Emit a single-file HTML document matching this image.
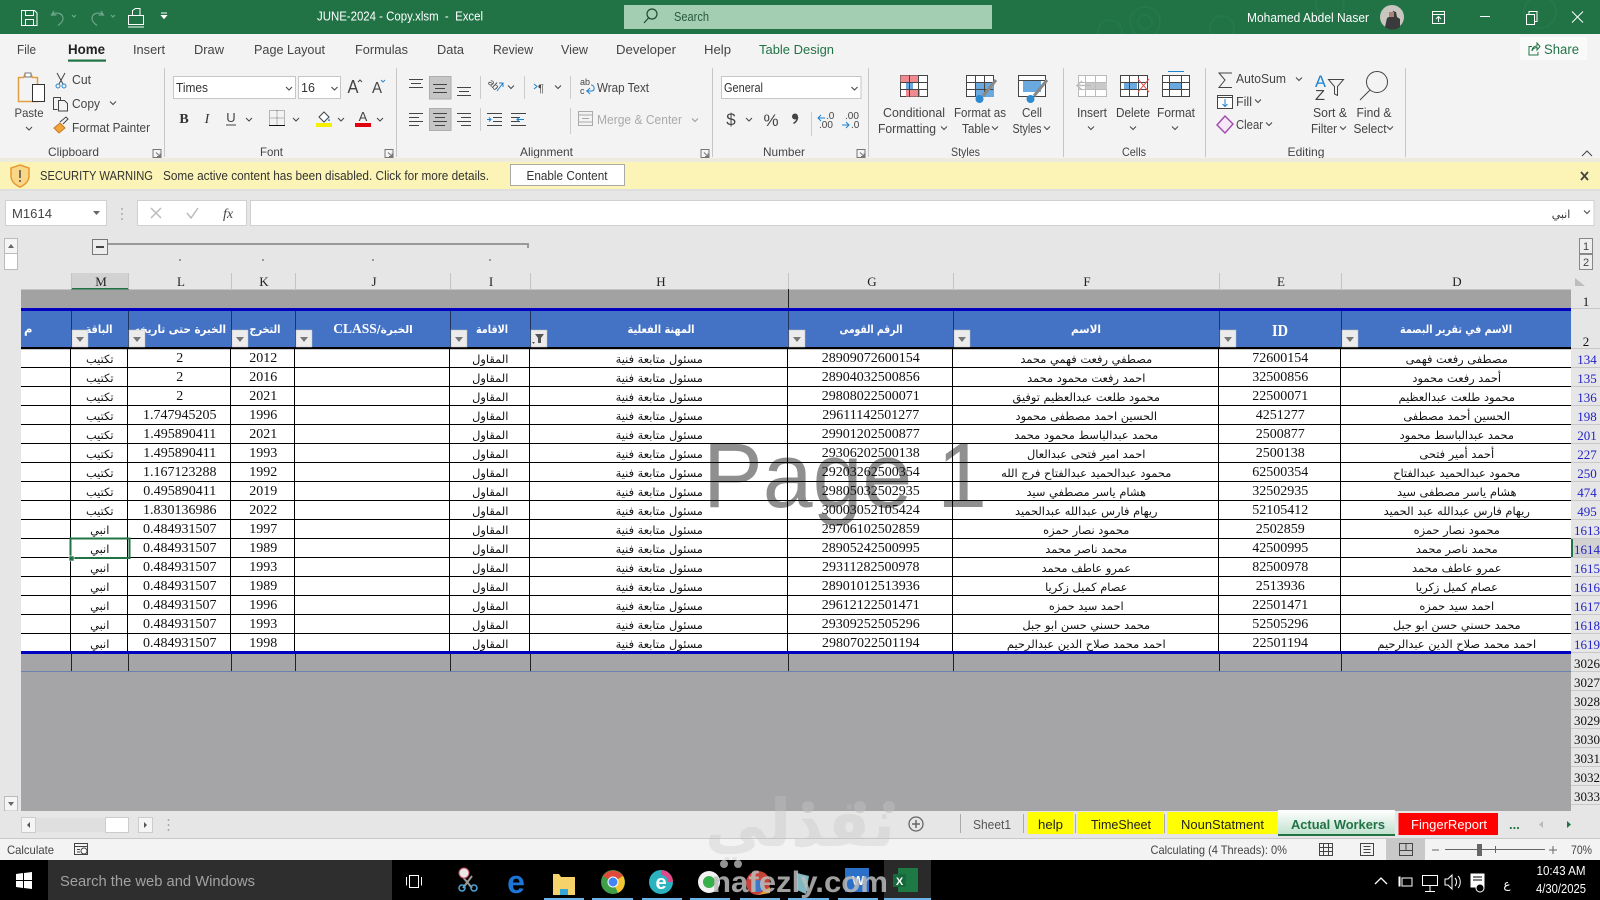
<!DOCTYPE html>
<html lang="en"><head><meta charset="utf-8"><title>JUNE-2024 - Copy.xlsm - Excel</title>
<style>
html,body{margin:0;padding:0;width:1600px;height:900px;overflow:hidden;background:#e6e6e6}
svg{position:absolute;left:0;top:0}
text{font-family:"Liberation Sans","DejaVu Sans",sans-serif;font-size:12.5px;fill:#444;white-space:pre}
.m{text-anchor:middle}
.w{fill:#fff}
.ar{font-family:"DejaVu Sans",sans-serif}
.s{font-family:"Liberation Serif","DejaVu Sans",serif}
.hd{font-family:"DejaVu Sans",sans-serif;font-weight:bold;font-size:11.5px;fill:#fff;text-anchor:middle}
.col{font-family:"Liberation Serif",serif;font-size:13px;fill:#222;text-anchor:middle}
.rb{font-family:"Liberation Serif",serif;font-size:13px;fill:#2222c8;text-anchor:middle}
.rk{font-family:"Liberation Serif",serif;font-size:13px;fill:#111;text-anchor:middle}
.i{fill:none;stroke:#444;stroke-width:1}
#t{position:absolute;left:21px;top:349px;width:1550px;table-layout:fixed;border-collapse:separate;border-spacing:0;font-family:"Liberation Serif","DejaVu Sans",serif;font-size:14px;color:#111;z-index:2}
#t td{height:19px;box-sizing:border-box;padding:2px 0 0 1.5px;text-align:center;border-right:1px solid #000;border-bottom:1px solid #000;overflow:hidden;white-space:nowrap;line-height:16px}
#t td:last-child{border-right:0}
#t td:nth-child(2),#t td:nth-child(6),#t td:nth-child(7),#t td:nth-child(9),#t td:nth-child(11){font-family:"DejaVu Sans",sans-serif;font-size:11.4px}
</style></head><body>
<svg width="1600" height="900" viewBox="0 0 1600 900" style="z-index:1">
<defs><path id="c" d="M-3-1.5l3 3 3-3" fill="none" stroke="#444"/><path id="g" d="M-3-1.5l3 3 3-3" fill="none" stroke="#999"/></defs>
<!-- title bar -->
<rect width="1600" height="34" fill="#217346"/>
<g fill="none" stroke="#25774c" stroke-width="2"><circle cx="1145" cy="22" r="15"/><circle cx="1145" cy="22" r="7"/><circle cx="1222" cy="28" r="12"/><circle cx="1110" cy="32" r="12"/><circle cx="1330" cy="4" r="14"/><circle cx="1540" cy="12" r="16"/></g>
<rect x="624" y="5" width="368" height="24" fill="#a3ceb2"/>
<g fill="none" stroke="#fff"><path d="M21.500 10.500h13l2.500 2.500v12.500h-15.500z"/><path d="M25.500 10.500v5h8v-5M25.500 25.500v-6h8v6"/><path d="M132.500 15v-4.500l3-2h4.500v6.500M128.500 15.500h15v9h-15zM128 27h16"/><path d="M161 13h6M161.500 15.500h5l-2.500 3z" fill="#fff"/></g>
<g fill="none" stroke="#6fa58a" stroke-width="1.200"><path d="M54 11l-2.500 4h5M52 14.500c5-3 11-1 11 4 0 3-2.500 5-5 7"/><path d="M101 11l2.500 4h-5M103 14.500c-5-3-11-1-11 4 0 3 2.500 5 5 7"/><path d="M72 15l2 2 2-2M111 15l2 2 2-2"/></g>
<g fill="none" stroke="#1d4a33" stroke-width="1.200"><circle cx="652" cy="14" r="5"/><path d="M648.500 18l-4.500 5"/></g>
<text x="317" y="20.500" class="w" font-size="13" textLength="166" lengthAdjust="spacingAndGlyphs" style="font-size:13px">JUNE-2024 - Copy.xlsm  -  Excel</text>
<text x="674" y="21" style="font-size:12.500px;fill:#2a5a40" textLength="35" lengthAdjust="spacingAndGlyphs">Search</text>
<text x="1247" y="22" class="w" style="font-size:12.500px" textLength="122" lengthAdjust="spacingAndGlyphs">Mohamed Abdel Naser</text>
<circle cx="1392" cy="17" r="12" fill="#c9c6c0"/><path d="M1385 27l2-9 4-2 2-5 3 1 1 5 3 2 0 8a12 12 0 0 1-15 0z" fill="#3a3a3c"/><rect x="1389" y="12" width="5" height="5" fill="#a88474"/>
<g fill="none" stroke="#fff"><path d="M1432.500 11.500h12v12h-12zM1432.500 14.500h12M1438.500 22v-5.500M1436 19l2.500-2.500 2.500 2.500"/><path d="M1480 16.500h10"/><path d="M1526.500 14.500h8v10h-8zM1529 14.500v-3h8v10h-2.500"/><path d="M1572 11.500l11 11M1583 11.500l-11 11"/></g>
<!-- ribbon -->
<rect y="34" width="1600" height="128" fill="#f3f3f3"/>
<g style="font-size:13px">
<text x="17" y="54" textLength="19" lengthAdjust="spacingAndGlyphs" style="font-size:13px">File</text>
<text x="68" y="54" textLength="37" lengthAdjust="spacingAndGlyphs" style="font-size:13.500px;fill:#222;font-weight:600">Home</text>
<text x="133" y="54" textLength="32" lengthAdjust="spacingAndGlyphs" style="font-size:13px">Insert</text>
<text x="194" y="54" textLength="30" lengthAdjust="spacingAndGlyphs" style="font-size:13px">Draw</text>
<text x="254" y="54" textLength="71" lengthAdjust="spacingAndGlyphs" style="font-size:13px">Page Layout</text>
<text x="355" y="54" textLength="53" lengthAdjust="spacingAndGlyphs" style="font-size:13px">Formulas</text>
<text x="437" y="54" textLength="27" lengthAdjust="spacingAndGlyphs" style="font-size:13px">Data</text>
<text x="493" y="54" textLength="40" lengthAdjust="spacingAndGlyphs" style="font-size:13px">Review</text>
<text x="561" y="54" textLength="27" lengthAdjust="spacingAndGlyphs" style="font-size:13px">View</text>
<text x="616" y="54" textLength="60" lengthAdjust="spacingAndGlyphs" style="font-size:13px">Developer</text>
<text x="704" y="54" textLength="27" lengthAdjust="spacingAndGlyphs" style="font-size:13px">Help</text>
<text x="759" y="54" textLength="75" lengthAdjust="spacingAndGlyphs" style="font-size:13px;fill:#217346">Table Design</text>
</g>
<rect x="68" y="59.500" width="38" height="2.200" fill="#217346"/>
<rect x="1520" y="37" width="67" height="23" fill="#fafafa"/>
<path d="M1532 46.500h-3v8.500h9v-3M1532 51c0-3 2-5 5-5v-3l3 3.500-3 3.500v-2.500c-2 0-4 1-5 3.500" fill="none" stroke="#217346"/>
<text x="1544" y="54" textLength="35" lengthAdjust="spacingAndGlyphs" style="font-size:13.500px;fill:#217346">Share</text>
<g stroke="#c6c6c6"><path d="M164.500 68v89M396.500 68v89M712.500 68v89M868.500 68v89M1063.500 68v89M1205.500 68v89M1405.500 68v89"/></g>
<!-- clipboard -->
<path d="M18.500 77.500h5l2-4h5l2 4h5v24h-19z" fill="#f3f3f3" stroke="#e0a040" stroke-width="1.500"/><rect x="32.500" y="84.500" width="12" height="17" fill="#fff" stroke="#333"/><rect x="25" y="73" width="6" height="4" fill="#fff" stroke="#777"/>
<text x="29" y="117" class="m" style="font-size:12px" textLength="29" lengthAdjust="spacingAndGlyphs">Paste</text><use href="#c" x="29" y="128.500"/>
<path d="M57 73l6 11M65 73l-6 11" class="i"/><circle cx="58" cy="86" r="2" fill="none" stroke="#2d89d0"/><circle cx="64" cy="86" r="2" fill="none" stroke="#2d89d0"/>
<text x="72" y="84" style="font-size:12.500px" textLength="19" lengthAdjust="spacingAndGlyphs">Cut</text>
<path d="M53.500 97.500h7l0 3M53.500 97.500v12h4M58.500 100.500h6l3 3v7.500h-9z" class="i"/>
<text x="72" y="108" style="font-size:12.500px" textLength="28" lengthAdjust="spacingAndGlyphs">Copy</text><use href="#c" x="113" y="103"/>
<path d="M54 128l6-5 5 5-6 5z" fill="#f2a33a" stroke="#c47a20"/><path d="M60 122l6-5 2 2-5 5" class="i"/>
<text x="72" y="132" style="font-size:12.500px" textLength="78" lengthAdjust="spacingAndGlyphs">Format Painter</text>
<text x="48" y="156" style="font-size:12px" textLength="51" lengthAdjust="spacingAndGlyphs">Clipboard</text>
<path id="l" d="M153 149.500h8v8h-8zM156 152.500l4 4M160 153.500v3h-3" fill="none" stroke="#777"/>
<use href="#l" x="232"/><use href="#l" x="548"/><use href="#l" x="704"/>
<!-- font -->
<rect x="173.500" y="76.500" width="122" height="22" fill="#fff" stroke="#c6c6c6"/><rect x="298.500" y="76.500" width="42" height="22" fill="#fff" stroke="#c6c6c6"/>
<text x="176" y="92" style="font-size:12.500px;fill:#333" textLength="32" lengthAdjust="spacingAndGlyphs">Times</text><use href="#c" x="289" y="88.500"/>
<text x="301" y="92" style="font-size:12.500px;fill:#333">16</text><use href="#c" x="334.500" y="88.500"/>
<text x="353" y="93" class="m" style="font-size:18px" textLength="11" lengthAdjust="spacingAndGlyphs">A</text><path d="M358 82l2-2 2 2" class="i"/><text x="377" y="93" class="m" style="font-size:16px" textLength="10" lengthAdjust="spacingAndGlyphs">A</text><path d="M381 80l2 2 2-2" style="fill:none;stroke:#2d89d0"/>
<text x="184" y="123" class="m s" style="font-size:14px;font-weight:bold;fill:#333">B</text>
<text x="207" y="123" class="m s" style="font-size:14px;font-style:italic;fill:#333">I</text>
<text x="231" y="122" class="m" style="font-size:13px">U</text><path d="M226 125h10" class="i"/><use href="#c" x="249" y="119.500"/>
<path d="M269.500 110.500h15v15h-15zM277 110.500v15M269.500 118h15" fill="none" stroke="#777" stroke-dasharray="1 1"/><path d="M269 125.500h16" class="i" style="stroke:#111"/><use href="#c" x="296" y="119.500"/>
<path d="M319 117l5-5 5 5-5 5z" fill="#fff" stroke="#444"/><path d="M329 118l1 3-2 0z" fill="#2d89d0"/><rect x="316" y="123" width="16" height="4" fill="#f5ef00"/><use href="#c" x="341" y="119.500"/>
<text x="363" y="121" class="m" style="font-size:13px">A</text><rect x="355" y="123" width="16" height="4" fill="#e00010"/><use href="#c" x="380" y="119.500"/>
<text x="260" y="156" style="font-size:12px" textLength="23" lengthAdjust="spacingAndGlyphs">Font</text>
<!-- alignment -->
<rect x="429.500" y="76.500" width="21.500" height="22.500" fill="#c6c6c6" stroke="#adadad"/><rect x="429.500" y="108.500" width="21.500" height="22" fill="#c6c6c6" stroke="#adadad"/>
<g class="i" fill="none" stroke="#444"><path d="M409 79.500h14M411 83.500h10M409 87.500h14"/><path d="M433 84.500h14M435 88.500h10M433 92.500h14"/><path d="M457 87.500h14M459 91.500h10M457 95.500h14"/><path d="M409 113.500h14M409 117.500h10M409 121.500h14M409 125.500h10"/><path d="M433 113.500h14M435 117.500h10M433 121.500h14M435 125.500h10"/><path d="M457 113.500h14M461 117.500h10M457 121.500h14M461 125.500h10"/><path d="M487 113.500h15M493 117.500h9M493 121.500h9M487 125.500h15"/><path d="M511 113.500h15M511 117.500h9M511 121.500h9M511 125.500h15"/></g>
<text x="489" y="87" transform="rotate(45 493 83)" style="font-size:10px">ab</text>
<path d="M487 119.500h4M489 117.500l2 2-2 2M517 119.500h7M519 117.500l-2 2 2 2" fill="none" stroke="#1b82d2"/><path d="M497 91l6-8M499 83h4v4" fill="none" stroke="#1b82d2"/>
<path d="M480.500 76v23M480.500 108v23M524.500 76v23M570.500 76v23M570.500 108v26" stroke="#ccc"/>
<use href="#c" x="511" y="87"/><use href="#c" x="558" y="87"/>
<path d="M534 84l3 2.500-3 2.500" fill="none" stroke="#1b82d2"/><text x="538" y="92" style="font-size:11px">¶</text>
<text x="580" y="85" style="font-size:9px">ab</text><text x="580" y="94" style="font-size:9px">c</text><path d="M586 91h6c3 0 3-6-1-6M590 88l-3 3 3 3" fill="none" stroke="#1b82d2"/>
<text x="597" y="92" style="font-size:12.500px" textLength="52" lengthAdjust="spacingAndGlyphs">Wrap Text</text>
<path d="M578.500 111.500h14v14h-14zM578.500 115h14M578.500 122h14M582 118.500h7" fill="none" stroke="#aaa"/>
<text x="597" y="124" style="font-size:12.500px;fill:#aaa" textLength="85" lengthAdjust="spacingAndGlyphs">Merge &amp; Center</text><use href="#g" x="695" y="120"/>
<text x="520" y="156" style="font-size:12px" textLength="53" lengthAdjust="spacingAndGlyphs">Alignment</text>
<!-- number -->
<rect x="721.500" y="76.500" width="139.500" height="22" fill="#fff" stroke="#c6c6c6"/>
<text x="724" y="92" style="font-size:12.500px;fill:#333" textLength="39" lengthAdjust="spacingAndGlyphs">General</text><use href="#c" x="854.500" y="88.500"/>
<text x="731" y="125" class="m" style="font-size:17px">$</text><use href="#c" x="749" y="119.500"/>
<text x="771" y="126" class="m" style="font-size:17px">%</text>
<circle cx="795" cy="116.500" r="3" fill="#444"/><path d="M797.500 117c0 3-1.500 5-4 6.500" fill="none" stroke="#444" stroke-width="1.600"/>
<path d="M811.500 112v24" stroke="#ccc"/>
<text x="826" y="119" style="font-size:10px">.0</text><text x="819" y="128" style="font-size:10px">.00</text><path d="M818 118h7M821 115l-3 3 3 3" fill="none" stroke="#1b82d2"/>
<text x="845" y="119" style="font-size:10px">.00</text><text x="851" y="128" style="font-size:10px">.0</text><path d="M842 125h7M846 122l3 3-3 3" fill="none" stroke="#1b82d2"/>
<text x="763" y="156" style="font-size:12px" textLength="42" lengthAdjust="spacingAndGlyphs">Number</text>
<!-- styles -->
<rect x="900.500" y="75.500" width="27" height="21" fill="#fff" stroke="#444"/><rect x="900.500" y="75.500" width="18" height="7" fill="#f08a90"/><rect x="906" y="90" width="14" height="6.500" fill="#f08a90"/><rect x="906" y="83" width="7" height="6.500" fill="#6aa9e0"/><path d="M900.500 82.500h27M900.500 89.500h27M909.500 75.500v21M918.500 75.500v21" stroke="#444" fill="none"/>
<rect x="966.500" y="75.500" width="27" height="21" fill="#fff" stroke="#444"/><rect x="976" y="83" width="18" height="14" fill="#6aa9e0"/><path d="M966.500 82.500h27M966.500 89.500h27M975.500 75.500v21M984.500 75.500v21" stroke="#444" fill="none"/><path d="M996 80l-13 16" stroke="#888" stroke-width="3"/><circle cx="979.500" cy="99" r="4" fill="#2d89d0"/>
<rect x="1018.500" y="75.500" width="27" height="21" fill="#fff" stroke="#444"/><rect x="1023" y="81" width="18" height="11" fill="#6aa9e0"/><path d="M1018.500 80.500h27" stroke="#444"/><path d="M1047 80l-13 16" stroke="#888" stroke-width="3"/><circle cx="1030.500" cy="99" r="4" fill="#2d89d0"/>
<text x="914" y="117" class="m" style="font-size:12.500px" textLength="62" lengthAdjust="spacingAndGlyphs">Conditional</text>
<text x="907" y="133" class="m" style="font-size:12.500px" textLength="58" lengthAdjust="spacingAndGlyphs">Formatting</text><use href="#c" x="944" y="128"/>
<text x="980" y="117" class="m" style="font-size:12.500px" textLength="52" lengthAdjust="spacingAndGlyphs">Format as</text>
<text x="976" y="133" class="m" style="font-size:12.500px" textLength="28" lengthAdjust="spacingAndGlyphs">Table</text><use href="#c" x="995" y="128"/>
<text x="1032" y="117" class="m" style="font-size:12.500px" textLength="20" lengthAdjust="spacingAndGlyphs">Cell</text>
<text x="1027" y="133" class="m" style="font-size:12.500px" textLength="29" lengthAdjust="spacingAndGlyphs">Styles</text><use href="#c" x="1047" y="128"/>
<text x="951" y="156" style="font-size:12px" textLength="29" lengthAdjust="spacingAndGlyphs">Styles</text>
<!-- cells -->
<rect x="1078.500" y="75.500" width="28" height="21" fill="#fff" stroke="#bbb"/><rect x="1085" y="82" width="22" height="7" fill="#c9c9c9"/><path d="M1085.500 75.500v21M1095.500 75.500v21M1078.500 82.500h28M1078.500 89.500h28" stroke="#bbb" fill="none"/><path d="M1077 85.500h14M1082 81l-5 4.500 5 4.500" fill="none" stroke="#bbb" stroke-width="1.500"/>
<rect x="1120.500" y="75.500" width="27" height="21" fill="#fff" stroke="#444"/><rect x="1124" y="82" width="13" height="7" fill="#6aa9e0"/><path d="M1129.500 75.500v21M1138.500 75.500v21M1120.500 82.500h27M1120.500 89.500h27" stroke="#444" fill="none"/><path d="M1138 79l11 13M1149 79l-11 13" stroke="#e2504c" fill="none"/>
<rect x="1162.500" y="75.500" width="27" height="21" fill="#fff" stroke="#444"/><rect x="1169" y="82" width="13" height="7" fill="#6aa9e0"/><path d="M1169.500 75.500v21M1181.500 75.500v21M1162.500 82.500h27M1162.500 89.500h27" stroke="#444" fill="none"/><path d="M1168 71.500h16" stroke="#1b82d2"/>
<text x="1092" y="117" class="m" style="font-size:12.500px" textLength="30" lengthAdjust="spacingAndGlyphs">Insert</text><use href="#c" x="1091" y="128"/>
<text x="1133" y="117" class="m" style="font-size:12.500px" textLength="34" lengthAdjust="spacingAndGlyphs">Delete</text><use href="#c" x="1133" y="128"/>
<text x="1176" y="117" class="m" style="font-size:12.500px" textLength="38" lengthAdjust="spacingAndGlyphs">Format</text><use href="#c" x="1175" y="128"/>
<text x="1134" y="156" class="m" style="font-size:12px" textLength="24" lengthAdjust="spacingAndGlyphs">Cells</text>
<!-- editing -->
<path d="M1232 73h-13l6 7-6 7.500h13" class="i"/><text x="1236" y="83" style="font-size:12.500px" textLength="50" lengthAdjust="spacingAndGlyphs">AutoSum</text><use href="#c" x="1299" y="79"/>
<rect x="1217.500" y="95.500" width="15" height="13" fill="#fff" stroke="#444"/><path d="M1217.500 97.500h15" stroke="#444"/><path d="M1225 99v7M1222.500 104l2.500 2.500 2.500-2.500" fill="none" stroke="#1b82d2"/>
<text x="1236" y="106" style="font-size:12.500px" textLength="16" lengthAdjust="spacingAndGlyphs">Fill</text><use href="#c" x="1258" y="101"/>
<path d="M1217 125l8-9 8 8-8 9z" fill="#f6e9f7" stroke="#a445b0" stroke-width="1.400"/>
<text x="1236" y="129" style="font-size:12.500px" textLength="27" lengthAdjust="spacingAndGlyphs">Clear</text><use href="#c" x="1269" y="124"/>
<text x="1315" y="87" style="font-size:17px;fill:#1b82d2" textLength="11" lengthAdjust="spacingAndGlyphs">A</text><text x="1315" y="100" style="font-size:15px" textLength="10" lengthAdjust="spacingAndGlyphs">Z</text><path d="M1328.500 79.500h15l-6 7v9l-3-1.500v-7.500z" class="i"/>
<circle cx="1377" cy="82" r="10.500" class="i"/><path d="M1370 90l-10 10" class="i"/>
<text x="1330" y="117" class="m" style="font-size:12.500px" textLength="34" lengthAdjust="spacingAndGlyphs">Sort &amp;</text>
<text x="1324" y="133" class="m" style="font-size:12.500px" textLength="26" lengthAdjust="spacingAndGlyphs">Filter</text><use href="#c" x="1343" y="128"/>
<text x="1374" y="117" class="m" style="font-size:12.500px" textLength="35" lengthAdjust="spacingAndGlyphs">Find &amp;</text>
<text x="1370" y="133" class="m" style="font-size:12.500px" textLength="33" lengthAdjust="spacingAndGlyphs">Select</text><use href="#c" x="1390" y="128"/>
<text x="1306" y="156" class="m" style="font-size:12px" textLength="37" lengthAdjust="spacingAndGlyphs">Editing</text>
<path d="M1582 156l5-5 5 5" class="i"/>
<!-- security bar -->
<rect y="158" width="1600" height="4" fill="#ecebdd"/>
<rect y="162" width="1600" height="27" fill="#fbf4b6"/><rect y="189" width="1600" height="2" fill="#dedede"/>
<path d="M20 165l9 3v8c0 5-4 9-9 11-5-2-9-6-9-11v-8z" fill="#f8d888" stroke="#e89a30" stroke-width="1.500"/><path d="M20 170v8M20 180v2" stroke="#444" stroke-width="1.400"/>
<text x="40" y="180" style="font-size:12.500px;fill:#333" textLength="113" lengthAdjust="spacingAndGlyphs">SECURITY WARNING</text>
<text x="163" y="180" style="font-size:12.500px;fill:#333" textLength="326" lengthAdjust="spacingAndGlyphs">Some active content has been disabled. Click for more details.</text>
<rect x="510.500" y="164.500" width="114" height="21" fill="#fff" stroke="#aaa"/>
<text x="567" y="180" class="m" style="font-size:12.500px;fill:#333" textLength="81" lengthAdjust="spacingAndGlyphs">Enable Content</text>
<path d="M1581 172l7 8M1588 172l-7 8" fill="none" stroke="#444" stroke-width="1.800"/>
<!-- formula bar -->
<rect x="5.500" y="200.500" width="101" height="25" fill="#fff" stroke="#d0d0d0"/>
<text x="12" y="218" style="font-size:13px;fill:#444" textLength="40" lengthAdjust="spacingAndGlyphs">M1614</text><path d="M93 211h7l-3.500 4z" fill="#666"/>
<path d="M122 208v2M122 213v2M122 218v2" stroke="#aaa" stroke-width="1.500"/>
<rect x="137.500" y="200.500" width="109" height="25" fill="#fff" stroke="#d0d0d0"/><rect x="250.500" y="200.500" width="1343.500" height="25" fill="#fff" stroke="#d0d0d0"/>
<path d="M151 208l10 10M161 208l-10 10" fill="none" stroke="#bbb" stroke-width="1.500"/><path d="M187 213l4 5 7-10" fill="none" stroke="#bbb" stroke-width="1.500"/>
<text x="228" y="218" class="m s" style="font-size:14px;font-style:italic;fill:#444">fx</text>
<text x="1561" y="218" class="m ar" style="font-size:11px;fill:#333">انبي</text><use href="#c" x="1587" y="212"/>
<!-- outline area -->
<rect x="4.500" y="238.500" width="13" height="15" fill="#f5f5f5" stroke="#bbb"/><path d="M8 248l3-4 3 4z" fill="#666"/><rect x="4.500" y="253.500" width="13" height="16" fill="#fff" stroke="#bbb"/>
<rect x="92.500" y="239.500" width="15" height="15" fill="#ececec" stroke="#777"/><path d="M96 247h8" stroke="#444" stroke-width="2"/>
<path d="M108 244h420v4" fill="none" stroke="#999" stroke-width="2"/>
<g fill="#999"><rect x="179" y="259" width="2" height="2"/><rect x="262" y="259" width="2" height="2"/><rect x="372" y="259" width="2" height="2"/><rect x="489" y="259" width="2" height="2"/></g>
<rect x="1579.500" y="238.500" width="13" height="15" fill="#eee" stroke="#888"/><rect x="1579.500" y="254.500" width="13" height="15" fill="#eee" stroke="#888"/>
<text x="1586" y="250" class="m" style="font-size:11px">1</text><text x="1586" y="266" class="m" style="font-size:11px">2</text>
<!-- column headers -->
<rect x="71" y="273" width="58" height="15" fill="#d2d2d2"/><rect x="71" y="288" width="58" height="1.500" fill="#217346"/>
<path d="M71.500 273v16M128.500 273v16M231.500 273v16M295.500 273v16M450.500 273v16M530.500 273v16M788.500 273v16M953.500 273v16M1219.500 273v16M1341.500 273v16" stroke="#c4c4c4"/>
<text x="101" y="286" class="col">M</text><text x="181" y="286" class="col">L</text><text x="264" y="286" class="col">K</text><text x="374" y="286" class="col">J</text><text x="491" y="286" class="col">I</text><text x="661" y="286" class="col">H</text><text x="872" y="286" class="col">G</text><text x="1087" y="286" class="col">F</text><text x="1281" y="286" class="col">E</text><text x="1457" y="286" class="col">D</text>
<path d="M1575 278v8h10z" fill="#bdbdbd"/>
<!-- grid backgrounds -->
<rect x="21" y="289.500" width="1550" height="521.500" fill="#a5a4a7"/>
<rect x="21" y="289.500" width="1550" height="19" fill="#a2a2a2"/>
<path d="M788.500 289v19" stroke="#222"/>
<rect x="21" y="349" width="1550" height="305" fill="#fff"/>
<rect x="21" y="311" width="1550" height="36" fill="#4472c4"/>
<!-- watermark page 1 -->
<text x="703" y="507" style="font-size:92px;fill:#8f8f8f" textLength="284" lengthAdjust="spacingAndGlyphs">Page 1</text>
</svg>
<table id="t"><colgroup><col style="width:50px"><col style="width:57px"><col style="width:103px"><col style="width:64px"><col style="width:155px"><col style="width:80px"><col style="width:258px"><col style="width:165px"><col style="width:266px"><col style="width:122px"><col style="width:230px"></colgroup>
<tr><td></td><td>تكتيب</td><td>2</td><td>2012</td><td></td><td>المقاول</td><td>مسئول متابعة فنية</td><td>28909072600154</td><td>مصطفي رفعت فهمي محمد</td><td>72600154</td><td>مصطفى رفعت فهمى</td></tr>
<tr><td></td><td>تكتيب</td><td>2</td><td>2016</td><td></td><td>المقاول</td><td>مسئول متابعة فنية</td><td>28904032500856</td><td>احمد رفعت محمود محمد</td><td>32500856</td><td>أحمد رفعت محمود</td></tr>
<tr><td></td><td>تكتيب</td><td>2</td><td>2021</td><td></td><td>المقاول</td><td>مسئول متابعة فنية</td><td>29808022500071</td><td>محمود طلعت عبدالعظيم توفيق</td><td>22500071</td><td>محمود طلعت عبدالعظيم</td></tr>
<tr><td></td><td>تكتيب</td><td>1.747945205</td><td>1996</td><td></td><td>المقاول</td><td>مسئول متابعة فنية</td><td>29611142501277</td><td>الحسين احمد مصطفى محمود</td><td>4251277</td><td>الحسين أحمد مصطفى</td></tr>
<tr><td></td><td>تكتيب</td><td>1.495890411</td><td>2021</td><td></td><td>المقاول</td><td>مسئول متابعة فنية</td><td>29901202500877</td><td>محمد عبدالباسط محمود محمد</td><td>2500877</td><td>محمد عبدالباسط محمود</td></tr>
<tr><td></td><td>تكتيب</td><td>1.495890411</td><td>1993</td><td></td><td>المقاول</td><td>مسئول متابعة فنية</td><td>29306202500138</td><td>احمد امير فتحى عبدالعال</td><td>2500138</td><td>أحمد أمير فتحى</td></tr>
<tr><td></td><td>تكتيب</td><td>1.167123288</td><td>1992</td><td></td><td>المقاول</td><td>مسئول متابعة فنية</td><td>29203262500354</td><td>محمود عبدالحميد عبدالفتاح فرج الله</td><td>62500354</td><td>محمود عبدالحميد عبدالفتاح</td></tr>
<tr><td></td><td>تكتيب</td><td>0.495890411</td><td>2019</td><td></td><td>المقاول</td><td>مسئول متابعة فنية</td><td>29805032502935</td><td>هشام ياسر مصطفي سيد</td><td>32502935</td><td>هشام ياسر مصطفى سيد</td></tr>
<tr><td></td><td>تكتيب</td><td>1.830136986</td><td>2022</td><td></td><td>المقاول</td><td>مسئول متابعة فنية</td><td>30003052105424</td><td>ريهام فارس عبدالله عبدالحميد</td><td>52105412</td><td>ريهام فارس عبدالله عبد الحميد</td></tr>
<tr><td></td><td>انبي</td><td>0.484931507</td><td>1997</td><td></td><td>المقاول</td><td>مسئول متابعة فنية</td><td>29706102502859</td><td>محمود نصار حمزه</td><td>2502859</td><td>محمود نصار حمزه</td></tr>
<tr><td></td><td>انبي</td><td>0.484931507</td><td>1989</td><td></td><td>المقاول</td><td>مسئول متابعة فنية</td><td>28905242500995</td><td>محمد ناصر محمد</td><td>42500995</td><td>محمد ناصر محمد</td></tr>
<tr><td></td><td>انبي</td><td>0.484931507</td><td>1993</td><td></td><td>المقاول</td><td>مسئول متابعة فنية</td><td>29311282500978</td><td>عمرو عاطف محمد</td><td>82500978</td><td>عمرو عاطف محمد</td></tr>
<tr><td></td><td>انبي</td><td>0.484931507</td><td>1989</td><td></td><td>المقاول</td><td>مسئول متابعة فنية</td><td>28901012513936</td><td>عصام كميل زكريا</td><td>2513936</td><td>عصام كميل زكريا</td></tr>
<tr><td></td><td>انبي</td><td>0.484931507</td><td>1996</td><td></td><td>المقاول</td><td>مسئول متابعة فنية</td><td>29612122501471</td><td>احمد سيد حمزه</td><td>22501471</td><td>احمد سيد حمزه</td></tr>
<tr><td></td><td>انبي</td><td>0.484931507</td><td>1993</td><td></td><td>المقاول</td><td>مسئول متابعة فنية</td><td>29309252505296</td><td>محمد حسني حسن ابو جبل</td><td>52505296</td><td>محمد حسني حسن ابو جبل</td></tr>
<tr><td></td><td>انبي</td><td>0.484931507</td><td>1998</td><td></td><td>المقاول</td><td>مسئول متابعة فنية</td><td>29807022501194</td><td>احمد محمد صلاح الدين عبدالرحيم</td><td>22501194</td><td>احمد محمد صلاح الدين عبدالرحيم</td></tr>
</table>
<svg width="1600" height="900" viewBox="0 0 1600 900" style="z-index:3">
<defs><path id="c2" d="M-3-1.500l3 3 3-3" fill="none" stroke="#444"/>
<g id="f"><rect width="16" height="17" fill="#ececec" stroke="#bbb" stroke-width=".5"/><path d="M4 7h8l-4 5z" fill="#777"/></g></defs>
<!-- header row -->
<rect x="21" y="308" width="1550" height="3" fill="#0000c0"/><rect x="21" y="347" width="1550" height="2.200" fill="#000"/>
<path d="M71.500 311v36M128.500 311v36M231.500 311v36M295.500 311v36M450.500 311v36M530.500 311v36M788.500 311v36M953.500 311v36M1219.500 311v36M1341.500 311v36" stroke="#1f3560"/>
<text x="24" y="333" class="ar" style="font-size:11.500px;fill:#fff;font-weight:bold">م</text>
<text x="99" y="333" class="hd" textLength="27" lengthAdjust="spacingAndGlyphs">الباقة</text>
<text x="180" y="333" class="hd" textLength="92" lengthAdjust="spacingAndGlyphs">الخبرة حتى تاريخه</text>
<text x="265" y="333" class="hd" textLength="31" lengthAdjust="spacingAndGlyphs">التخرج</text>
<text x="373" y="333" class="hd" style="direction:rtl;font-family:'Liberation Serif','DejaVu Sans',serif;font-size:13.500px"><tspan style="font-family:'DejaVu Sans',sans-serif;font-size:10.500px">الخبرة/</tspan>CLASS</text>
<text x="492" y="333" class="hd" textLength="32" lengthAdjust="spacingAndGlyphs">الاقامة</text>
<text x="661" y="333" class="hd" textLength="67" lengthAdjust="spacingAndGlyphs">المهنة الفعلية</text>
<text x="871" y="333" class="hd" textLength="63" lengthAdjust="spacingAndGlyphs">الرقم القومى</text>
<text x="1086" y="333" class="hd" textLength="30" lengthAdjust="spacingAndGlyphs">الاسم</text>
<text x="1280" y="336" class="hd s" style="font-family:'Liberation Serif',serif;font-size:17px" textLength="16" lengthAdjust="spacingAndGlyphs">ID</text>
<text x="1456" y="333" class="hd" textLength="112" lengthAdjust="spacingAndGlyphs">الاسم في تقرير البصمة</text>
<use href="#f" x="72" y="330"/><use href="#f" x="129" y="330"/><use href="#f" x="232" y="330"/><use href="#f" x="296" y="330"/><use href="#f" x="451" y="330"/>
<rect x="531" y="330" width="16" height="17" fill="#ececec" stroke="#bbb" stroke-width=".5"/><path d="M535 334h9l-3 4v5h-3v-5z" fill="#555"/><path d="M532 342h3l-1.500 2z" fill="#555"/>
<use href="#f" x="789" y="330"/><use href="#f" x="954" y="330"/><use href="#f" x="1220" y="330"/><use href="#f" x="1342" y="330"/>
<!-- bottom blue line + footer row -->
<rect x="21" y="651" width="1550" height="3" fill="#0000c0"/>
<path d="M71.500 654v18M128.500 654v18M231.500 654v18M295.500 654v18M450.500 654v18M530.500 654v18M788.500 654v18M953.500 654v18M1219.500 654v18M1341.500 654v18" stroke="#222"/>
<path d="M21 671.500h1550" stroke="#6a82b0"/>
<!-- selection -->
<rect x="70.500" y="538.500" width="59" height="19.500" fill="none" stroke="#217346" stroke-width="2"/><rect x="69" y="556" width="5" height="5" fill="#217346" stroke="#fff" stroke-width=".6"/>
<!-- row header -->
<rect x="1571" y="289" width="29" height="522" fill="#e6e6e6"/>
<rect x="1571" y="539" width="29" height="19" fill="#d2d2d2"/><rect x="1571" y="539" width="2" height="19" fill="#217346"/>
<path d="M1571 308.500h29M1571 348.500h29M1571 367.500h29M1571 386.500h29M1571 405.500h29M1571 424.500h29M1571 443.500h29M1571 462.500h29M1571 481.500h29M1571 500.500h29M1571 519.500h29M1571 538.500h29M1571 557.500h29M1571 576.500h29M1571 595.500h29M1571 614.500h29M1571 633.500h29M1571 652.500h29M1571 671.500h29M1571 690.500h29M1571 709.500h29M1571 728.500h29M1571 747.500h29M1571 766.500h29M1571 785.500h29M1571 804.500h29" stroke="#c8c8c8"/>
<text x="1586" y="306" class="rk">1</text><text x="1586" y="346" class="rk">2</text>
<g class="rb"><text x="1587" y="364" class="rb">134</text><text x="1587" y="383" class="rb">135</text><text x="1587" y="402" class="rb">136</text><text x="1587" y="421" class="rb">198</text><text x="1587" y="440" class="rb">201</text><text x="1587" y="459" class="rb">227</text><text x="1587" y="478" class="rb">250</text><text x="1587" y="497" class="rb">474</text><text x="1587" y="516" class="rb">495</text><text x="1587" y="535" class="rb">1613</text><text x="1587" y="554" class="rb">1614</text><text x="1587" y="573" class="rb">1615</text><text x="1587" y="592" class="rb">1616</text><text x="1587" y="611" class="rb">1617</text><text x="1587" y="630" class="rb">1618</text><text x="1587" y="649" class="rb">1619</text></g>
<text x="1587" y="668" class="rk">3026</text><text x="1587" y="687" class="rk">3027</text><text x="1587" y="706" class="rk">3028</text><text x="1587" y="725" class="rk">3029</text><text x="1587" y="744" class="rk">3030</text><text x="1587" y="763" class="rk">3031</text><text x="1587" y="782" class="rk">3032</text><text x="1587" y="801" class="rk">3033</text>
<rect x="4.500" y="796.500" width="13" height="14.500" fill="#f5f5f5" stroke="#bbb"/><path d="M8 802h6l-3 4z" fill="#666"/>
<!-- tab bar -->
<rect y="811" width="1600" height="27" fill="#e6e6e6"/><path d="M0 838.500h1600" stroke="#c8c8c8"/>
<rect x="21.500" y="817.500" width="14" height="15" fill="#f5f5f5" stroke="#ccc"/><path d="M30 822v6l-3-3z" fill="#555"/>
<rect x="36" y="818" width="69" height="14" fill="#dfdfdf"/>
<rect x="105.500" y="817.500" width="23" height="15" fill="#fff" stroke="#ccc"/>
<rect x="138.500" y="817.500" width="14" height="15" fill="#f5f5f5" stroke="#ccc"/><path d="M144 822v6l3-3z" fill="#555"/>
<path d="M168.500 819v2M168.500 824v2M168.500 829v2" stroke="#aaa" stroke-width="1.500"/>
<circle cx="916" cy="824" r="7" fill="none" stroke="#666" stroke-width="1.300"/><path d="M912 824h8M916 820v8" stroke="#666" stroke-width="1.500"/>
<path d="M960.500 814v19M1023.500 814v19M1075.500 814v19M1164.500 814v19" stroke="#aaa"/>
<text x="973" y="829" style="font-size:13px;fill:#555" textLength="38" lengthAdjust="spacingAndGlyphs">Sheet1</text>
<rect x="1027" y="812" width="46" height="22" fill="#ffff00"/><text x="1038" y="829" style="font-size:13px;fill:#222" textLength="25" lengthAdjust="spacingAndGlyphs">help</text>
<rect x="1078" y="812" width="85" height="22" fill="#ffff00"/><text x="1091" y="829" style="font-size:13px;fill:#222" textLength="60" lengthAdjust="spacingAndGlyphs">TimeSheet</text>
<rect x="1167" y="812" width="110" height="22" fill="#ffff00"/><text x="1181" y="829" style="font-size:13px;fill:#222" textLength="83" lengthAdjust="spacingAndGlyphs">NounStatment</text>
<defs><linearGradient id="tg" x1="0" y1="0" x2="0" y2="1"><stop offset="0" stop-color="#fff"/><stop offset="1" stop-color="#bfe0cd"/></linearGradient></defs>
<rect x="1278" y="810" width="117" height="25" fill="url(#tg)"/><rect x="1278" y="834" width="117" height="2" fill="#217346"/>
<text x="1291" y="829" style="font-size:13px;fill:#217346;font-weight:bold" textLength="94" lengthAdjust="spacingAndGlyphs">Actual Workers</text>
<rect x="1398.500" y="813" width="99.500" height="22" fill="#ff0000"/><text x="1411" y="829" style="font-size:13px;fill:#fff" textLength="76" lengthAdjust="spacingAndGlyphs">FingerReport</text>
<text x="1509" y="829" style="font-size:13px;fill:#217346;font-weight:bold">...</text>
<path d="M1543 821v7l-4-3.500z" fill="#bbb"/><path d="M1567 821v7l4-3.500z" fill="#217346"/>
<!-- status bar -->
<rect y="839" width="1600" height="21" fill="#f3f3f3"/>
<text x="7" y="854" style="font-size:12px" textLength="47" lengthAdjust="spacingAndGlyphs">Calculate</text>
<path d="M74.500 843.500h13v11h-13zM74.500 846.500h13M77 849.500h3M77 852h3" class="i"/><circle cx="84" cy="851" r="3" fill="#fff" stroke="#444"/>
<text x="1150.500" y="854" style="font-size:12px" textLength="136.500" lengthAdjust="spacingAndGlyphs">Calculating (4 Threads): 0%</text>
<rect x="1386" y="839" width="39" height="21" fill="#c8c8c8"/>
<path d="M1319.500 843.500h13v12h-13zM1319.500 847.500h13M1319.500 851.500h13M1323.500 843.500v12M1328.500 843.500v12" class="i"/>
<path d="M1360.500 843.500h13v12h-13zM1363.500 846.500h7M1363.500 849.500h7M1363.500 852.500h7" class="i"/>
<path d="M1399.500 843.500h13v12h-13zM1399.500 850.500h13M1406 843.500v7" class="i"/>
<path d="M1432 850h7M1445 849.500h100M1495.500 846v7M1549 850h8M1553 846v8" stroke="#666" fill="none"/><rect x="1477" y="844" width="5" height="12" fill="#666"/>
<text x="1571" y="854" style="font-size:12px" textLength="21" lengthAdjust="spacingAndGlyphs">70%</text>
<!-- nafezly watermark over tab/status -->
<text x="800" y="846" class="m ar" style="font-size:66px;font-weight:bold;fill:#c4c4c4;opacity:.32" textLength="190" lengthAdjust="spacingAndGlyphs">نفذلي</text>
<g fill="#bdbdbd" opacity=".55"><circle cx="808" cy="807" r="6"/><circle cx="860" cy="807" r="6"/><circle cx="889" cy="807" r="6"/></g>
<!-- taskbar -->
<rect y="860" width="1600" height="40" fill="#000"/>
<path d="M16 874l7-1v7h-7zM24 873l8-1v8h-8zM16 881h7v7l-7-1zM24 881h8v8l-8-1z" fill="#fff"/>
<rect x="48" y="860" width="344" height="40" fill="#2e2e2e"/>
<text x="60" y="886" style="font-size:15px;fill:#a2a2a2" textLength="195" lengthAdjust="spacingAndGlyphs">Search the web and Windows</text>
<path d="M409.500 875.500h9v12h-9zM406.500 877v8.500M421.500 877v8.500" fill="none" stroke="#fff"/>
<path d="M462 876l10 12M472 876l-9 12" stroke="#9a9a9a" stroke-width="2"/><circle cx="464" cy="873" r="5" fill="#e8e8e8" stroke="#c85060"/><circle cx="462" cy="888" r="3" fill="none" stroke="#4aa8d8" stroke-width="1.500"/><circle cx="474" cy="888" r="3" fill="none" stroke="#4aa8d8" stroke-width="1.500"/>
<text x="516" y="893" class="m" style="font-size:32px;font-weight:bold;fill:#1b76d8">e</text>
<path d="M553 874h6l2 3h14v18h-22z" fill="#f5d36a"/><rect x="560" y="889" width="8" height="6" fill="#35a6d8"/>
<circle cx="613" cy="882" r="12" fill="#3f9f48"/><path d="M613 882l-10-6a12 12 0 0 1 20 0z" fill="#e04a3a"/><path d="M613 882l10-6a12 12 0 0 1-5 17z" fill="#f6c431"/><circle cx="613" cy="882" r="5" fill="#4285f4" stroke="#fff"/>
<circle cx="661" cy="882" r="12" fill="#2bb3c0"/><path d="M661 870a12 12 0 0 1 12 12h-5c0-4-3-7-7-7z" fill="#e04a8a"/><text x="661" y="889" class="m" style="font-size:20px;font-weight:bold;fill:#fff">e</text>
<circle cx="709" cy="882" r="11" fill="#f2f2f2"/><circle cx="709" cy="882" r="6" fill="#35b04a"/>
<circle cx="758" cy="883" r="12" fill="#c94238"/><circle cx="758" cy="886" r="6" fill="#3b78c8"/><path d="M758 895l12-8 0 6z" fill="#e0a040"/>
<path d="M797 873l12 3-3 18-9-4z" fill="#7fb8c0"/>
<rect x="845" y="868" width="24" height="24" fill="#2a70c8"/><text x="852" y="885" style="font-size:13px;fill:#fff;font-weight:bold">W</text>
<rect x="884" y="860" width="47" height="40" fill="#2a2a2a"/>
<rect x="898" y="868" width="20" height="24" fill="#1e7a45"/><rect x="893" y="874" width="13" height="13" fill="#17683a"/><text x="899.500" y="885" class="m" style="font-size:11px;fill:#fff;font-weight:bold">X</text>
<g fill="#6db4e6"><rect x="544" y="898" width="40" height="2"/><rect x="592" y="898" width="41" height="2"/><rect x="642" y="898" width="40" height="2"/><rect x="690" y="898" width="40" height="2"/><rect x="740" y="898" width="40" height="2"/><rect x="788" y="898" width="41" height="2"/><rect x="838" y="898" width="40" height="2"/><rect x="884" y="898" width="47" height="2"/></g>
<text x="712" y="892" style="font-family:'Liberation Sans',sans-serif;font-size:30px;font-weight:bold;fill:#bdbdbd;opacity:.85" textLength="176" lengthAdjust="spacingAndGlyphs">nafezly.com</text>
<g fill="#b8b8b8" opacity=".8"><circle cx="724" cy="864" r="4"/><circle cx="738" cy="864" r="4"/></g>
<path d="M1375 884l6-6 6 6" fill="none" stroke="#fff" stroke-width="1.300"/>
<path d="M1399 877h1v9h-1zM1402 878h10v8h-10z" fill="none" stroke="#fff"/>
<path d="M1422.500 875.500h15v10h-15zM1430 885.500v6M1425 891.500h10" fill="none" stroke="#fff"/>
<path d="M1445 879h3l4-4v14l-4-4h-3zM1455 878c2 2 2 6 0 8M1458 876c3 3 3 9 0 12" fill="none" stroke="#fff"/>
<path d="M1470.500 873.500h14v14h-14z" fill="#fff"/><circle cx="1480" cy="888" r="4" fill="#000" stroke="#fff"/><path d="M1473 877h9M1473 880h9" stroke="#000"/>
<text x="1507" y="888" class="m ar" style="font-size:12px;fill:#fff">ع</text>
<text x="1561" y="875" class="m w" style="font-size:12.500px" textLength="49" lengthAdjust="spacingAndGlyphs">10:43 AM</text>
<text x="1561" y="893" class="m w" style="font-size:12.500px" textLength="50" lengthAdjust="spacingAndGlyphs">4/30/2025</text>
</svg>
</body></html>
